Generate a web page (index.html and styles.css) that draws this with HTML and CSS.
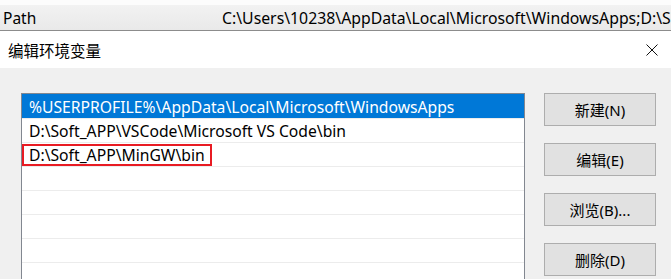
FILE: index.html
```html
<!DOCTYPE html>
<html lang="zh-CN">
<head>
<meta charset="utf-8">
<title>编辑环境变量</title>
<link rel="stylesheet" href="styles.css">
</head>
<body>
<div class="top-strip"></div>
<div class="path-row">
  <span class="path-name">Path</span>
  <span class="path-value">C:\Users\10238\AppData\Local\Microsoft\WindowsApps;D:\Soft_APP\VSCode\Microsoft VS Code\bin</span>
</div>
<div class="dialog">
  <div class="titlebar">
    <span class="title">编辑环境变量</span>
    <svg class="close" width="12" height="12" viewBox="0 0 12 12"><path d="M0.5 0.5 L11.5 11.5 M11.5 0.5 L0.5 11.5" stroke="#111" stroke-width="1" fill="none"/></svg>
  </div>
  <div class="content">
    <div class="list">
      <div class="row selected">%USERPROFILE%\AppData\Local\Microsoft\WindowsApps</div>
      <div class="row">D:\Soft_APP\VSCode\Microsoft VS Code\bin</div>
      <div class="row"><span class="highlight">D:\Soft_APP\MinGW\bin</span></div>
      <div class="row"></div>
      <div class="row"></div>
      <div class="row"></div>
      <div class="row"></div>
      <div class="row"></div>
    </div>
    <div class="buttons">
      <button class="btn">新建(N)</button>
      <button class="btn">编辑(E)</button>
      <button class="btn">浏览(B)...</button>
      <button class="btn">删除(D)</button>
    </div>
  </div>
</div>
</body>
</html>
```
FILE: styles.css
```css
html, body {
  margin: 0;
  padding: 0;
  background: #f0f0f0;
  overflow: hidden;
  height: 279px;
}
body {
  font-family: "Noto Sans", "Noto Sans CJK SC", sans-serif;
  color: #000;
}
.top-strip {
  height: 5px;
  background: #fcfcfc;
}
.path-row {
  height: 26px;
  box-sizing: border-box;
  background: linear-gradient(#f2f2f2, #e9e9e9);
  border-bottom: 1px solid #8c8c8c;
  display: flex;
  align-items: center;
  font-size: 15.5px;
  white-space: nowrap;
  overflow: hidden;
}
.path-name {
  padding-left: 3px;
  width: 219px;
  flex: none;
}
.path-value {
  flex: none;
  font-size: 15.8px;
}
.dialog {
  background: #f0f0f0;
}
.titlebar {
  height: 37px;
  background: #fff;
  display: flex;
  align-items: center;
  justify-content: space-between;
  padding: 1px 13px 0 8px;
  box-sizing: border-box;
}
.title {
  font-size: 15.5px;
  font-family: "Noto Sans CJK SC", sans-serif;
}
.close {
  display: block;
}
.content {
  display: flex;
  padding: 25px 0 0 21px;
}
.list {
  width: 504px;
  height: 200px;
  box-sizing: border-box;
  border: 1px solid #828790;
  border-bottom: none;
  background: #fff;
  flex: none;
}
.row {
  height: 24px;
  box-sizing: border-box;
  border-top: 1px solid #ececec;
  padding: 1px 0 0 7px;
  font-size: 15.7px;
  line-height: 22px;
  white-space: nowrap;
  position: relative;
}
.row.selected {
  border-top: none;
  background: #0078d7;
  color: #fff;
  padding-top: 2px;
}
.highlight {
  position: absolute;
  left: 0;
  top: 1px;
  width: 190px;
  height: 22px;
  box-sizing: border-box;
  border: 2px solid #e81b23;
  padding-left: 5px;
  line-height: 19px;
}
.buttons {
  display: flex;
  flex-direction: column;
  gap: 17px;
  margin-left: 19px;
}
.btn {
  width: 112px;
  height: 33px;
  margin: 0;
  padding: 0;
  background: #e1e1e1;
  border: 1px solid #adadad;
  font-family: "Noto Sans", "Noto Sans CJK SC", sans-serif;
  font-size: 15px;
  color: #000;
}
```
